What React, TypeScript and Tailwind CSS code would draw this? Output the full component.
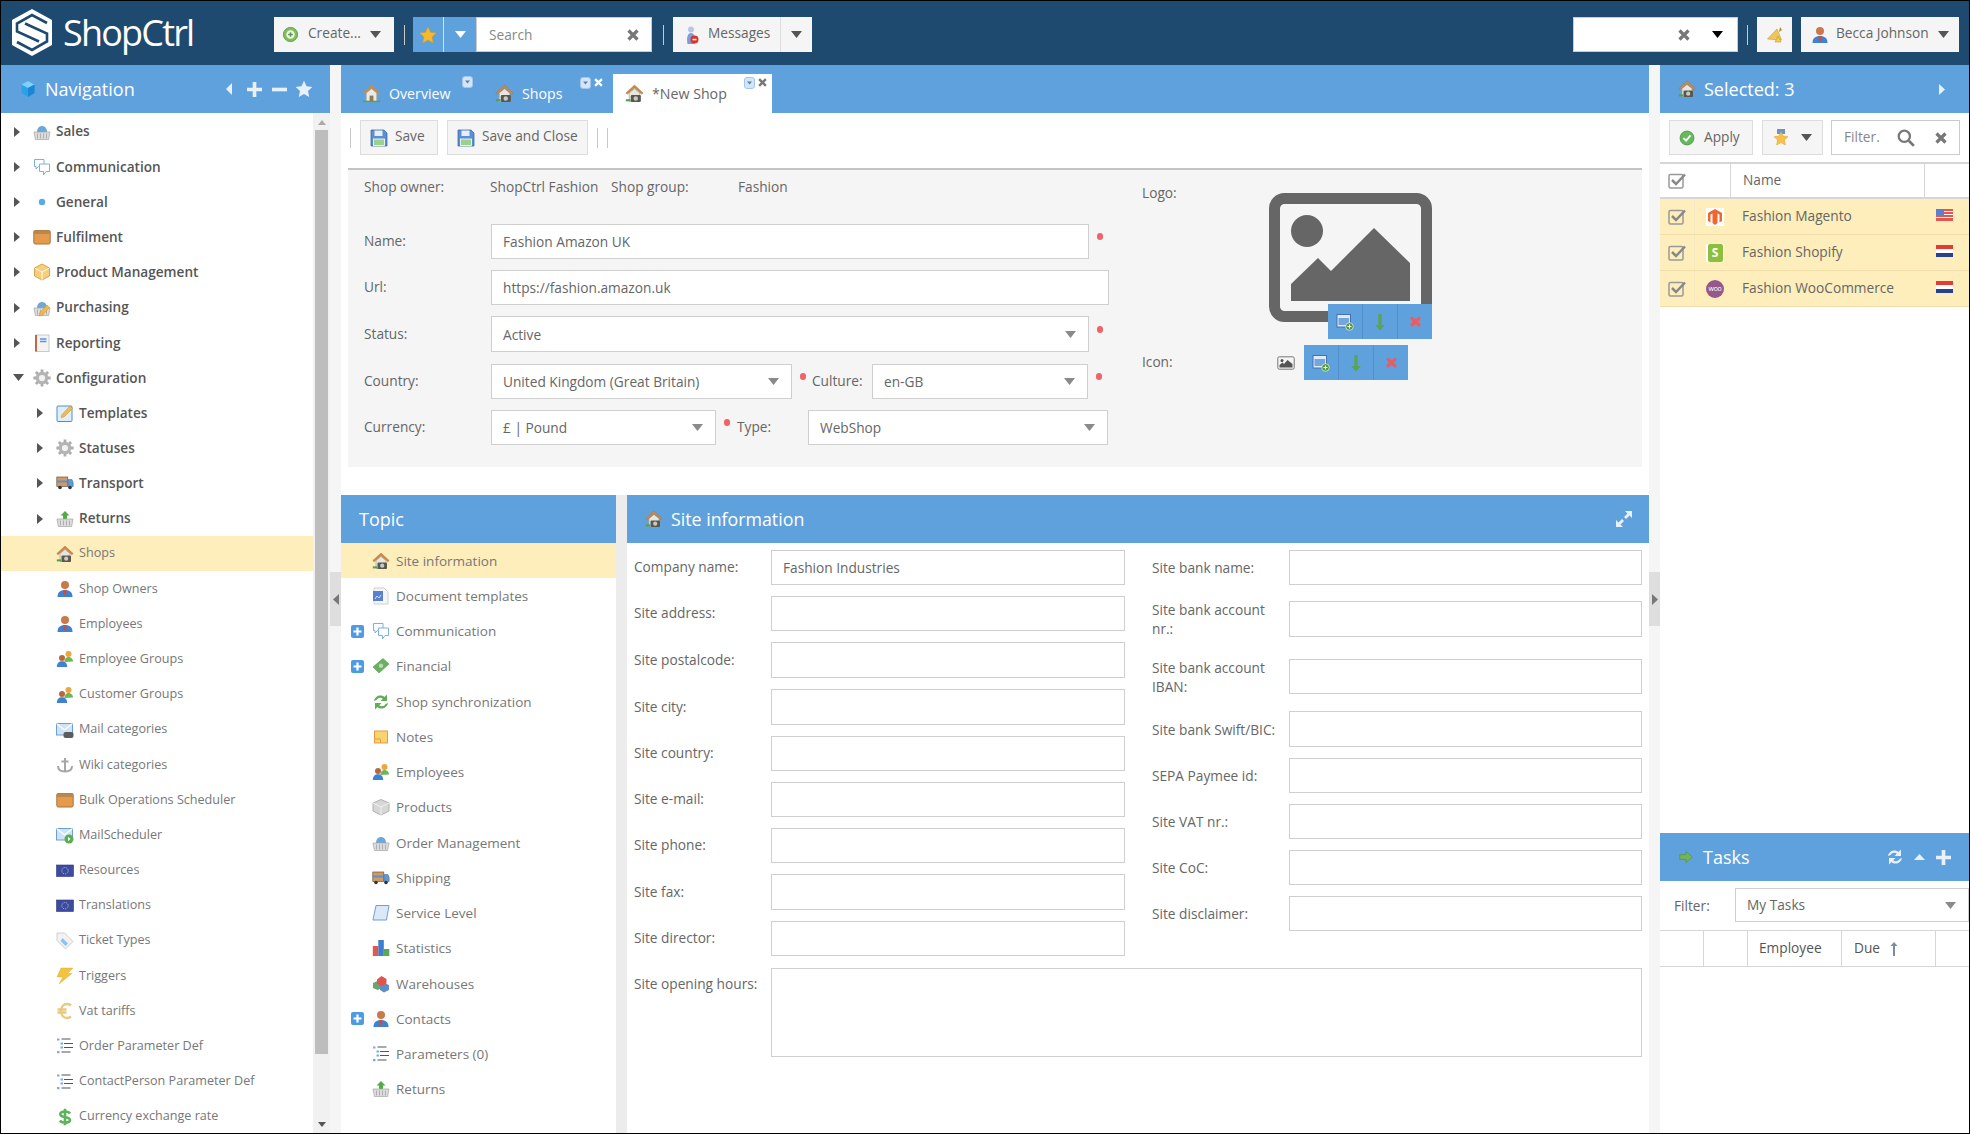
import React from 'react';

const shopGlyph = (
  <>
    <path d="M4 8.500 9 4.500l5 4V16.500H4Z" fill="#e9e6df" stroke="#a9a59c" strokeWidth=".7" />
    <path d="M.8 8.600 9 1l8.200 7.600-1.300 1.200L9 3.700 2.100 9.800Z" fill="#c98b4a" stroke="#a86f35" strokeWidth=".4" />
    <rect x="5.500" y="10.500" width="9.500" height="6.500" rx="1" fill="#58584f" />
    <circle cx="10.200" cy="13.700" r="2.100" fill="#c9c9c2" />
    <rect x=".8" y="14.400" width="4.400" height="2" fill="#4fa24a" />
  </>
);

const basketBase = (
  <>
    <path d="M1 9h16l-1.400 7.500H2.400Z" fill="#dcdcdc" stroke="#a5a5a5" strokeWidth=".7" />
    <path d="M4.500 10.500v5M7.500 10.500v5M10.500 10.500v5M13.500 10.500v5" stroke="#a5a5a5" strokeWidth=".8" />
  </>
);

const gearTeeth = 'M9 .4v3.500M9 14.100v3.500M.4 9h3.500M14.100 9h3.500M2.900 2.900l2.500 2.500M12.600 12.600l2.500 2.500M15.100 2.900l-2.500 2.500M5.400 12.600l-2.500 2.500';

const icons: Record<string, React.ReactNode> = {
  shop: shopGlyph,
  home: (
    <>
      <path d="M4 8.500 9 4.500l5 4V16.500H4Z" fill="#efeadf" stroke="#a9a59c" strokeWidth=".7" />
      <path d="M.8 8.600 9 1l8.200 7.600-1.300 1.200L9 3.700 2.100 9.800Z" fill="#c98b4a" />
      <rect x="7.200" y="11" width="3.600" height="5.500" fill="#8a7a5e" />
      <rect x=".8" y="15.800" width="16.400" height="1.400" fill="#5fa24d" />
    </>
  ),
  basket: (
    <>
      <path d="M4 9c0-4 2.500-6 5-6s5 2 5 6Z" fill="#6da9d8" />
      {basketBase}
    </>
  ),
  basketUp: (
    <>
      <path d="M9 1l4.500 4.500H11V9H7V5.500H4.500Z" fill="#55ab48" />
      {basketBase}
    </>
  ),
  basketPen: (
    <>
      <path d="M4 9c0-4 2.500-6 5-6s5 2 5 6Z" fill="#6da9d8" />
      {basketBase}
      <path d="M6 17l1-3.500 7-7.500 2.500 2.500-7 7.500Z" fill="#f0b949" stroke="#c98b2c" strokeWidth=".5" />
    </>
  ),
  chat: (
    <>
      <path d="M1.500 1.500h9.500v7H5.500L3 11V8.500H1.500Z" fill="#fff" stroke="#7eb0e0" />
      <path d="M6.500 6h10v7.500h-3.500L10.500 17v-3.500h-4Z" fill="#fff" stroke="#7eb0e0" />
    </>
  ),
  dot: <circle cx="9" cy="9" r="3.200" fill="#53aee8" />,
  crate: (
    <>
      <rect x=".8" y="2.500" width="16.400" height="13.500" rx="1.500" fill="#e69a4c" stroke="#a9743d" />
      <rect x=".8" y="2.500" width="16.400" height="3.500" fill="#b98850" />
    </>
  ),
  cube: (
    <>
      <path d="M9 1l7.500 4v8L9 17l-7.500-4V5Z" fill="#f6cf7d" stroke="#d9a24b" />
      <path d="M1.500 5 9 9l7.500-4M9 9v8" fill="none" stroke="#fff" strokeWidth=".9" />
    </>
  ),
  notebook: (
    <>
      <rect x="2.500" y="1" width="13.500" height="16.500" fill="#f3f3f3" stroke="#c9c9c9" />
      <rect x="2" y="1" width="2" height="16.500" fill="#c06a45" />
      <path d="M7 5h6.500M7 7.500h6.500" stroke="#5f92da" strokeWidth="1.500" />
    </>
  ),
  gear: (
    <>
      <path d={gearTeeth} stroke="#adadad" strokeWidth="2.800" />
      <circle cx="9" cy="9" r="4.700" fill="#f2f2f2" stroke="#b4b4b4" strokeWidth="3.200" />
    </>
  ),
  template: (
    <>
      <rect x="1" y="2" width="15" height="15.500" rx="1" fill="#dfeefc" stroke="#4d8ed0" />
      <path d="M5 13.500 6 10.500 14 2l2.500 2.500L8 13Z" fill="#f0bb52" stroke="#c58f2d" strokeWidth=".5" />
    </>
  ),
  truck: (
    <>
      <rect x=".8" y="3" width="11" height="9.500" fill="#d29a5e" stroke="#6c5a48" strokeWidth=".7" />
      <path d="M.8 6.500h11v2h-11Z" fill="#5f91c9" />
      <path d="M12 5.500h4l1.200 3v4H12Z" fill="#5d9ad8" stroke="#44648a" strokeWidth=".5" />
      <circle cx="4" cy="13.500" r="1.800" fill="#333" />
      <circle cx="14" cy="13.500" r="1.800" fill="#333" />
    </>
  ),
  person: (
    <>
      <circle cx="9" cy="5" r="4" fill="#c9794a" />
      <path d="M1.500 17c0-5 3-7 7.500-7s7.500 2 7.500 7Z" fill="#3f82d2" />
      <path d="M8 10h2l.5 4-1.500 1.500L7.500 14Z" fill="#d9483b" />
    </>
  ),
  people: (
    <>
      <circle cx="12.500" cy="4" r="3" fill="#eca63f" />
      <path d="M8.500 12c0-3.500 2-5 4-5s4.500 1.500 4.500 4.500Z" fill="#6cb65a" />
      <circle cx="6" cy="8" r="3" fill="#b9683c" />
      <path d="M.8 17c0-4 2.200-5.800 5.200-5.800s5.200 1.800 5.200 5.800Z" fill="#3f82d2" />
    </>
  ),
  mailLink: (
    <>
      <rect x=".5" y="2.500" width="16" height="11.500" fill="#cfe3f7" stroke="#6d9ed2" />
      <path d="M.5 2.500 8.500 9l8-6.500" fill="none" stroke="#fff" strokeWidth="1.200" />
      <rect x="7.500" y="11" width="10" height="6" rx="2" fill="#5c5c5c" />
    </>
  ),
  mailPlay: (
    <>
      <rect x=".5" y="2.500" width="16" height="11.500" fill="#cfe3f7" stroke="#6d9ed2" />
      <path d="M.5 2.500 8.500 9l8-6.500" fill="none" stroke="#fff" strokeWidth="1.200" />
      <circle cx="13" cy="13" r="4.500" fill="#5bad4e" />
      <path d="M12 10.800v4.400l2.500-2.200Z" fill="#fff" />
    </>
  ),
  anchor: (
    <path d="M9 2v13M5.500 5.500h7M2 10c0 4 3.500 5.500 7 5.500s7-1.500 7-5.500" fill="none" stroke="#a6a6a6" strokeWidth="2" />
  ),
  eu: (
    <>
      <rect x=".5" y="3" width="17" height="11.500" fill="#3d4b9e" stroke="#2e3a80" strokeWidth=".6" />
      <circle cx="9" cy="8.700" r="3.200" fill="none" stroke="#c6c9e8" strokeWidth=".9" strokeDasharray="1 1" />
    </>
  ),
  tag: (
    <>
      <path d="M1 1h7.500L17 9.500 9.500 17 1 8.500Z" fill="#f2f2f2" stroke="#cfcfcf" />
      <path d="M6.500 6 12 11.500 9.500 14 4.500 9Z" fill="#8cc3ee" />
    </>
  ),
  bolt: <path d="M5 1h12l-5.500 5.500H16L3 17l4-7H1Z" fill="#f1c33f" stroke="#dba72b" strokeWidth=".4" />,
  euro: (
    <path d="M15 3.500C13.800 2.500 12.500 2 11 2 7.500 2 5 5 5 9s2.500 7 6 7c1.500 0 2.800-.5 4-1.500M1.500 7.500h9M1.500 10.500h9" fill="none" stroke="#eac97e" strokeWidth="2.400" />
  ),
  list: (
    <>
      <path d="M5.500 2h9M8 6.500h9M8 10.500h9M5.500 15h9" stroke="#555" strokeWidth="1.200" />
      <path d="M1 1.500h2.500v2H1ZM4.500 5.500H7v2H4.500ZM4.500 9.500H7v2H4.500ZM1 14h2.500v2.200H1Z" fill="#7fa9e6" />
    </>
  ),
  dollar: (
    <path d="M14 5.500C13 4 11.200 3.500 9 3.500c-2.800 0-4.700 1-4.700 2.800C4.300 10.500 14 8 14 12c0 1.800-2 2.700-5 2.700-2.300 0-4-.7-5-2.200M9 .8v16.400" fill="none" stroke="#5cb35b" strokeWidth="2.600" />
  ),
  doc: (
    <>
      <path d="M2 1h10l4 4v12H2Z" fill="#f5f5f5" stroke="#cfcfcf" />
      <rect x="1" y="4" width="10" height="10" fill="#5a7fd0" />
      <path d="M3 12l2-3 2 2 2-3" stroke="#cfe0fb" fill="none" />
    </>
  ),
  money: (
    <>
      <path d="M1 10 11 1.500 17 7 7 16Z" fill="#69b060" stroke="#4b8e45" strokeWidth=".5" />
      <circle cx="9" cy="8.700" r="2.200" fill="#b4dcae" />
    </>
  ),
  sync: (
    <>
      <path d="M2 8c.6-3.500 3.500-5.500 6.500-5.500 1.700 0 3 .5 4 1.500L15 1.500V8H8.500l2.300-2.300c-.7-.7-1.500-1-2.500-1-1.800 0-3.200 1-3.800 2.300Z" fill="#5fae55" />
      <path d="M16 10c-.6 3.500-3.500 5.500-6.500 5.500-1.700 0-3-.5-4-1.500L3 16.500V10h6.500l-2.300 2.300c.7.7 1.500 1 2.500 1 1.800 0 3.200-1 3.800-2.300Z" fill="#5fae55" />
    </>
  ),
  note: (
    <>
      <rect x="2.500" y="3" width="13" height="12" fill="#fbd46e" stroke="#e59c43" />
      <path d="M2.500 11h6v4" fill="none" stroke="#e59c43" />
    </>
  ),
  lego: (
    <>
      <path d="M1 5 9 1.500 17 5v8l-8 4-8-4Z" fill="#d7d7d7" stroke="#b0b0b0" />
      <path d="M1 5l8 4 8-4M9 9v8" fill="none" stroke="#f1f1f1" />
    </>
  ),
  scroll: <path d="M4 1.500h13l-2.500 14.500H1Z" fill="#dbe8f7" stroke="#6e9fd4" />,
  chart: (
    <>
      <rect x=".8" y="7" width="5.500" height="10" fill="#e2574e" />
      <rect x="6.300" y="1" width="5.500" height="16" fill="#3e7dd0" />
      <rect x="11.800" y="10" width="5.500" height="7" fill="#58a957" />
    </>
  ),
  boxes: (
    <>
      <path d="M1 8l4.500-2L10 8v5l-4.500 2L1 13Z" fill="#69a66a" />
      <path d="M8 10l4-2 5 2v5l-5 2.500L8 15Z" fill="#5d8fc4" />
      <path d="M5 4.500 9.500 1l5 3v4.500l-5 3-4.500-3Z" fill="#e0544e" />
    </>
  ),
  floppy: (
    <>
      <path d="M1 1h13l3 3v13H1Z" fill="#5b8fd4" stroke="#31619f" strokeWidth=".7" />
      <rect x="4.500" y="1.500" width="8" height="5.500" fill="#e6eef8" />
      <rect x="3.500" y="10" width="11" height="6.500" fill="#9bd08e" stroke="#fff" strokeWidth=".8" />
    </>
  ),
  create: (
    <>
      <circle cx="9" cy="9" r="7.500" fill="#7fbf5c" stroke="#5d9a42" />
      <circle cx="9" cy="9" r="4.500" fill="#f2f2f2" />
      <path d="M9 6.500v5M6.500 9h5" stroke="#5d9a42" strokeWidth="1.600" />
    </>
  ),
  star: <path d="M9 .8l2.500 5.500 5.800.7-4.300 4 1.200 5.900L9 14l-5.200 2.900L5 11 .7 7l5.800-.7Z" fill="#f4b92f" stroke="#d69a1d" strokeWidth=".5" />,
  medal: (
    <>
      <path d="M5 0h8v5H5Z" fill="#6c93c8" />
      <path d="M9 2.500l2.100 4.600 4.900.6-3.600 3.300 1 5-4.400-2.500-4.400 2.500 1-5L2 7.700l4.900-.6Z" fill="#f7c04a" stroke="#dca12a" strokeWidth=".5" />
    </>
  ),
  messages: (
    <>
      <circle cx="8" cy="3.500" r="3" fill="#b9c6e6" />
      <path d="M4.500 18c-1-5-.5-11 3.500-11s4.500 6 3.500 11Z" fill="#7f9bd9" />
      <circle cx="11.500" cy="13.500" r="4" fill="#d7342b" />
      <rect x="9.500" y="12.800" width="4" height="1.500" fill="#fff" />
    </>
  ),
  bell: (
    <>
      <path d="M1.500 13 11 3l4.500 11Z" fill="#eec65c" stroke="#c69a32" strokeWidth=".6" />
      <path d="M14 1l2 3-3 2Z" fill="#b98a2d" />
      <path d="M9 16l3-6 3 6Z" fill="#f7d048" stroke="#b58a20" strokeWidth=".5" />
    </>
  ),
  apply: (
    <>
      <circle cx="9" cy="9" r="7.800" fill="#66b85d" stroke="#4d9a45" />
      <path d="M5 9.200 8 12l5-6" fill="none" stroke="#fff" strokeWidth="2" />
    </>
  ),
  addImage: (
    <>
      <rect x="1" y="1.500" width="13.500" height="12.500" fill="#dfe9f7" stroke="#4770b4" />
      <rect x="2.500" y="5" width="10.500" height="7" fill="#72a6dc" />
      <circle cx="13.500" cy="13.500" r="3.800" fill="#4d9c3f" stroke="#fff" strokeWidth=".6" />
      <path d="M13.500 11.500v4M11.500 13.500h4" stroke="#fff" />
    </>
  ),
  down: <path d="M7.300 1h3.400v11H14l-5 5.500L4 12h3.300Z" fill="#58a55a" />,
  remove: <path d="M4 2 9 6l5-4 2.500 2.500L12.500 9l4 5-2.500 2.500-5-4-5 4L1.500 14l4-5-4-4.500Z" fill="#ee5a5f" />,
  next: <path d="M1 6h8V2l8 7-8 7v-4H1Z" fill="#74b652" stroke="#4f8f3a" strokeWidth=".8" />,
  hex: (
    <>
      <path d="M9 1l6.500 3.500V13L9 17l-6.500-4V4.500Z" fill="#2ba2e8" />
      <path d="M2.500 4.500 9 8l6.500-3.500L9 1Z" fill="#7fd0f7" />
      <path d="M9 8v9l6.500-4V4.500Z" fill="#1b86d6" />
    </>
  ),
  imageSmall: (
    <>
      <rect x=".8" y="2.800" width="16.400" height="12.400" rx="1.500" fill="#f5f5f5" stroke="#777" />
      <circle cx="5" cy="6.500" r="1.500" fill="#555" />
      <path d="M2.500 13.500v-2.500L5.500 8.500 7 10l3.500-4L15.500 10v3.500Z" fill="#555" />
    </>
  ),
};

function Ic({ name, className = 'h-[18px] w-[18px]' }: { name: string; className?: string }) {
  return (
    <svg viewBox="0 0 18 18" className={`shrink-0 ${className}`}>
      {icons[name]}
    </svg>
  );
}

function Caret({ className = 'fill-[#8a8a8a]' }: { className?: string }) {
  return (
    <svg viewBox="0 0 11 7" className={`h-[7px] w-[11px] shrink-0 ${className}`}>
      <path d="M0 0h11L5.500 7Z" />
    </svg>
  );
}

function Cross({ className = 'h-3 w-3 stroke-[#777]' }: { className?: string }) {
  return (
    <svg viewBox="0 0 12 12" className={`shrink-0 ${className}`}>
      <path d="M1.500 1.500l9 9M10.500 1.500l-9 9" strokeWidth="3.200" />
    </svg>
  );
}

function Pin() {
  return (
    <svg viewBox="0 0 11 12" className="h-3 w-[11px]">
      <rect x=".5" y=".5" width="10" height="11" rx="2.500" fill="#d4e5f8" stroke="#a3c6ec" />
      <path d="M3 4.500h5L5.500 7.500Z" fill="#5f7fa3" />
    </svg>
  );
}

function Check() {
  return (
    <svg viewBox="0 0 19 16" className="h-4 w-[19px] shrink-0">
      <rect x="1" y="1.500" width="14" height="13.500" rx="1.500" fill="none" stroke="#999" strokeWidth="1.500" />
      <path d="M4 7l4 4 9-9.500" fill="none" stroke="#888" strokeWidth="2.500" />
    </svg>
  );
}

function Sep() {
  return <div className="h-5 w-px shrink-0 bg-[#c8c8c8]" />;
}

const navItems = [
  { label: 'Sales', icon: 'basket', level: 0, arrow: 'right' },
  { label: 'Communication', icon: 'chat', level: 0, arrow: 'right' },
  { label: 'General', icon: 'dot', level: 0, arrow: 'right' },
  { label: 'Fulfilment', icon: 'crate', level: 0, arrow: 'right' },
  { label: 'Product Management', icon: 'cube', level: 0, arrow: 'right' },
  { label: 'Purchasing', icon: 'basketPen', level: 0, arrow: 'right' },
  { label: 'Reporting', icon: 'notebook', level: 0, arrow: 'right' },
  { label: 'Configuration', icon: 'gear', level: 0, arrow: 'down' },
  { label: 'Templates', icon: 'template', level: 1, arrow: 'right' },
  { label: 'Statuses', icon: 'gear', level: 1, arrow: 'right' },
  { label: 'Transport', icon: 'truck', level: 1, arrow: 'right' },
  { label: 'Returns', icon: 'basketUp', level: 1, arrow: 'right' },
  { label: 'Shops', icon: 'shop', level: 1, active: true },
  { label: 'Shop Owners', icon: 'person', level: 1 },
  { label: 'Employees', icon: 'person', level: 1 },
  { label: 'Employee Groups', icon: 'people', level: 1 },
  { label: 'Customer Groups', icon: 'people', level: 1 },
  { label: 'Mail categories', icon: 'mailLink', level: 1 },
  { label: 'Wiki categories', icon: 'anchor', level: 1 },
  { label: 'Bulk Operations Scheduler', icon: 'crate', level: 1 },
  { label: 'MailScheduler', icon: 'mailPlay', level: 1 },
  { label: 'Resources', icon: 'eu', level: 1 },
  { label: 'Translations', icon: 'eu', level: 1 },
  { label: 'Ticket Types', icon: 'tag', level: 1 },
  { label: 'Triggers', icon: 'bolt', level: 1 },
  { label: 'Vat tariffs', icon: 'euro', level: 1 },
  { label: 'Order Parameter Def', icon: 'list', level: 1 },
  { label: 'ContactPerson Parameter Def', icon: 'list', level: 1 },
  { label: 'Currency exchange rate', icon: 'dollar', level: 1 },
];

const topics = [
  { label: 'Site information', icon: 'shop', active: true },
  { label: 'Document templates', icon: 'doc' },
  { label: 'Communication', icon: 'chat', plus: true },
  { label: 'Financial', icon: 'money', plus: true },
  { label: 'Shop synchronization', icon: 'sync' },
  { label: 'Notes', icon: 'note' },
  { label: 'Employees', icon: 'people' },
  { label: 'Products', icon: 'lego' },
  { label: 'Order Management', icon: 'basket' },
  { label: 'Shipping', icon: 'truck' },
  { label: 'Service Level', icon: 'scroll' },
  { label: 'Statistics', icon: 'chart' },
  { label: 'Warehouses', icon: 'boxes' },
  { label: 'Contacts', icon: 'person', plus: true },
  { label: 'Parameters (0)', icon: 'list' },
  { label: 'Returns', icon: 'basketUp' },
];

const siteLeft = [
  { label: 'Company name:', value: 'Fashion Industries', h: 'h-[35px]' },
  { label: 'Site address:', h: 'h-[35px]' },
  { label: 'Site postalcode:', h: 'h-[36px]' },
  { label: 'Site city:', h: 'h-[36px]' },
  { label: 'Site country:', h: 'h-[35px]' },
  { label: 'Site e-mail:', h: 'h-[35px]' },
  { label: 'Site phone:', h: 'h-[35px]' },
  { label: 'Site fax:', h: 'h-[36px]' },
  { label: 'Site director:', h: 'h-[35px]' },
];

const siteRight = [
  { label: 'Site bank name:', cls: 'h-[35px] mb-[16px]' },
  { label: 'Site bank account nr.:', cls: 'h-[36px] mb-[22px]' },
  { label: 'Site bank account IBAN:', cls: 'h-[35px] mb-[17px]' },
  { label: 'Site bank Swift/BIC:', cls: 'h-[36px] mb-[11px]' },
  { label: 'SEPA Paymee id:', cls: 'h-[35px] mb-[11px]' },
  { label: 'Site VAT nr.:', cls: 'h-[35px] mb-[11px]' },
  { label: 'Site CoC:', cls: 'h-[35px] mb-[11px]' },
  { label: 'Site disclaimer:', cls: 'h-[35px]' },
];

function Field({ className, value, select }: { className: string; value?: string; select?: boolean }) {
  return (
    <div className={`flex shrink-0 items-center justify-between border border-[#cfcfcf] bg-white pl-[11px] pr-[12px] text-[13.7px] text-[#666] ${className}`}>
      <span className="mt-[2px]">{value}</span>
      {select && <Caret />}
    </div>
  );
}

function Required() {
  return <div className="mb-[10px] ml-[8px] mr-[2px] h-[7px] w-[6px] shrink-0 rounded-full bg-[#f0636b]" />;
}

function ImageButtons() {
  return (
    <div className="flex h-[35px] w-[104px] bg-[#5fa1dd]">
      <div className="flex flex-1 items-center justify-center border-r border-[#5390c9]"><Ic name="addImage" /></div>
      <div className="flex flex-1 items-center justify-center border-r border-[#5390c9]"><Ic name="down" /></div>
      <div className="flex flex-1 items-center justify-center"><Ic name="remove" className="h-[13px] w-[13px]" /></div>
    </div>
  );
}

function Tab({ label, icon, className, children }: { label: string; icon: string; className: string; children?: React.ReactNode }) {
  return (
    <div className={`relative flex h-[39px] items-center gap-2 pl-3 text-[14.2px] ${className}`}>
      <Ic name={icon} className="h-[19px] w-[19px]" />
      <span>{label}</span>
      {children}
    </div>
  );
}

function TopBar() {
  return (
    <div className="flex h-16 shrink-0 items-start bg-[#1f4a70] pt-4">
      <div className="-mt-[8px] flex w-[273px] items-center pl-[10px]">
        <svg viewBox="0 0 42 47" className="h-[47px] w-[42px]">
          <path d="M21 0 41 11v25L21 47 1 36V11Z" fill="#fff" />
          <path d="M36 14 21 6 6 14.500v8l22 10M6 33l15 8 15-8.500v-8L14 14.500" fill="none" stroke="#1f4a70" strokeWidth="2.600" />
        </svg>
        <span className="ml-[10px] text-[36px] font-medium leading-none tracking-[-1.800px] text-white">ShopCtrl</span>
      </div>
      <div className="flex h-[35px] w-[120px] items-center bg-[#f5f5f5] pl-2 text-[13.7px] text-[#666]">
        <Ic name="create" className="h-[17px] w-[17px]" />
        <span className="-mt-[2px] ml-[9px]">Create...</span>
        <Caret className="ml-[9px] fill-[#555]" />
      </div>
      <div className="ml-[10px] mr-[8px] mt-[8px]"><Sep /></div>
      <div className="flex h-[35px] w-[63px] bg-[#5fa1dd]">
        <div className="flex w-[31px] items-center justify-center border-r border-white/70"><Ic name="star" /></div>
        <div className="flex flex-1 items-center justify-center"><Caret className="fill-white" /></div>
      </div>
      <div className="flex h-[35px] w-[176px] items-center justify-between border border-[#ccc] bg-white pl-[12px] pr-[12px] text-[13.7px] text-[#888]">
        <span className="mt-[1px]">Search</span>
        <Cross />
      </div>
      <div className="ml-[11px] mr-[9px] mt-[8px]"><Sep /></div>
      <div className="flex h-[35px] w-[139px] items-center bg-[#f5f5f5] text-[13.7px] text-[#666]">
        <div className="flex h-full w-[108px] items-center gap-[7px] border-r border-[#ddd] pl-[10px]">
          <Ic name="messages" />
          <span className="-mt-[2px]">Messages</span>
        </div>
        <div className="flex flex-1 items-center justify-center"><Caret className="fill-[#555]" /></div>
      </div>
      <div className="ml-auto flex h-[35px] w-[165px] items-center border border-[#ccc] bg-white pl-[104px]">
        <Cross />
        <Caret className="ml-[22px]" />
      </div>
      <div className="ml-[9px] mr-[9px] mt-[8px]"><Sep /></div>
      <div className="flex h-[35px] w-[35px] items-center justify-center bg-[#f5f5f5]"><Ic name="bell" /></div>
      <div className="ml-[9px] mr-[10px] flex h-[35px] w-[158px] items-center bg-[#f5f5f5] pl-[10px] text-[13.7px] text-[#666]">
        <Ic name="person" />
        <span className="-mt-[2px] ml-[7px]">Becca Johnson</span>
        <Caret className="ml-[9px] fill-[#555]" />
      </div>
    </div>
  );
}

function Navigation() {
  return (
    <div className="flex w-[329px] shrink-0 flex-col bg-white">
      <div className="flex h-12 shrink-0 items-center bg-[#5fa1dd] pl-[18px] text-[18px] text-white">
        <Ic name="hex" />
        <span className="ml-[8px]">Navigation</span>
        <div className="ml-auto flex items-center pr-[17px] text-white">
          <svg viewBox="0 0 6 12" className="h-3 w-[6px] fill-[#e8f1fa]"><path d="M6 0v12L0 6Z" /></svg>
          <svg viewBox="0 0 14 14" className="ml-[15px] h-[15px] w-[15px] stroke-[#e8f1fa]"><path d="M7 0v14M0 7h14" strokeWidth="3.400" /></svg>
          <svg viewBox="0 0 14 14" className="ml-[10px] h-[15px] w-[15px] stroke-[#e8f1fa]"><path d="M0 7h14" strokeWidth="3.400" /></svg>
          <svg viewBox="0 0 18 18" className="ml-[8px] h-[18px] w-[18px] fill-[#e8f1fa]"><path d="M9 .8l2.500 5.500 5.800.7-4.300 4 1.200 5.900L9 14l-5.200 2.900L5 11 .7 7l5.800-.7Z" /></svg>
        </div>
      </div>
      <div className="flex flex-1 overflow-hidden">
        <div className="w-[312px] shrink-0 pt-[1px]">
          {navItems.map((item) => (
            <div
              key={item.label}
              className={`flex h-[35.2px] items-center ${item.level === 1 ? 'pl-[36px]' : 'pl-[13px]'} ${item.active ? 'bg-[#fdeebc]' : ''}`}
            >
              <div className="flex w-[19px] shrink-0 items-center">
                {item.arrow === 'right' && (
                  <svg viewBox="0 0 6 10" className="h-[10px] w-[6px] fill-[#555]"><path d="M0 0l6 5-6 5Z" /></svg>
                )}
                {item.arrow === 'down' && <Caret className="-ml-[1px] fill-[#555]" />}
              </div>
              <Ic name={item.icon} />
              <span className={`ml-[5px] whitespace-nowrap ${item.level === 0 || item.arrow ? 'text-[13.6px] font-semibold text-[#555]' : 'text-[12.6px] text-[#777]'}`}>
                {item.label}
              </span>
            </div>
          ))}
        </div>
        <div className="flex w-[17px] flex-col items-center bg-[#f1f1f1]">
          <svg viewBox="0 0 8 5" className="mt-[7px] h-[5px] w-2 fill-[#aaa]"><path d="M4 0l4 5H0Z" /></svg>
          <div className="mt-[5px] h-[924px] w-[13px] bg-[#bdbdbd]" />
          <svg viewBox="0 0 8 5" className="mb-[6px] mt-auto h-[5px] w-2 fill-[#555]"><path d="M0 0h8L4 5Z" /></svg>
        </div>
      </div>
    </div>
  );
}

function Gutter({ dir }: { dir: 'left' | 'right' }) {
  return (
    <div className="flex w-[11px] shrink-0 items-center">
      <div className="flex h-[54px] w-[11px] items-center justify-center bg-[#dedede]">
        <svg viewBox="0 0 6 11" className="h-[11px] w-[6px] fill-[#777]">
          <path d={dir === 'left' ? 'M6 0v11L0 5.500Z' : 'M0 0v11l6-5.500Z'} />
        </svg>
      </div>
    </div>
  );
}

function ShopForm() {
  return (
    <div className="mx-[7px] flex h-[299px] w-[1294px] border-t-2 border-[#c4c4c4] bg-[#f5f5f5] text-[13.7px] text-[#666]">
      <div className="w-[782px] shrink-0 pl-[16px] pt-[8px]">
        <div className="flex h-[18px] items-center">
          <span className="w-[126px]">Shop owner:</span>
          <span className="w-[121px]">ShopCtrl Fashion</span>
          <span className="w-[127px]">Shop group:</span>
          <span>Fashion</span>
        </div>
        <div className="mt-[28px] flex h-[35px] items-center">
          <span className="w-[127px]">Name:</span>
          <Field className="h-[35px] w-[598px]" value="Fashion Amazon UK" />
          <Required />
        </div>
        <div className="mt-[11px] flex h-[35px] items-center">
          <span className="w-[127px]">Url:</span>
          <Field className="h-[35px] w-[618px]" value="https://fashion.amazon.uk" />
        </div>
        <div className="mt-[11px] flex h-[36px] items-center">
          <span className="w-[127px]">Status:</span>
          <Field className="h-[36px] w-[598px]" value="Active" select />
          <Required />
        </div>
        <div className="mt-[12px] flex h-[35px] items-center">
          <span className="w-[127px]">Country:</span>
          <Field className="h-[35px] w-[301px]" value="United Kingdom (Great Britain)" select />
          <Required />
          <span className="ml-[4px] w-[60px]">Culture:</span>
          <Field className="h-[35px] w-[216px]" value="en-GB" select />
          <Required />
        </div>
        <div className="mt-[11px] flex h-[35px] items-center">
          <span className="w-[127px]">Currency:</span>
          <Field className="h-[35px] w-[225px]" value="£ | Pound" select />
          <Required />
          <span className="ml-[5px] w-[71px]">Type:</span>
          <Field className="h-[35px] w-[300px]" value="WebShop" select />
        </div>
      </div>
      <div className="flex-1 pl-[12px] pt-[23px]">
        <div className="flex items-start">
          <span className="-mt-[10px] w-[127px]">Logo:</span>
          <div className="relative h-[129px] w-[163px]">
            <svg viewBox="0 0 163 129" className="h-[129px] w-[163px]">
              <rect x="5.500" y="5.500" width="152" height="118" rx="10" fill="none" stroke="#666" strokeWidth="11" />
              <circle cx="38" cy="38" r="16" fill="#666" />
              <path d="M22 108V91l27-26 13 13 43-43 36 35v38Z" fill="#666" />
            </svg>
            <div className="absolute left-[59px] top-[111px]"><ImageButtons /></div>
          </div>
        </div>
        <div className="mt-[23px] flex h-[35px] items-center">
          <span className="w-[135px]">Icon:</span>
          <Ic name="imageSmall" />
          <div className="ml-[9px]"><ImageButtons /></div>
        </div>
      </div>
    </div>
  );
}

function TopicPanel() {
  return (
    <div className="w-[275px] shrink-0 bg-white">
      <div className="flex h-12 items-center bg-[#5fa1dd] pl-[18px] text-[18px] text-white">Topic</div>
      {topics.map((t) => (
        <div key={t.label} className={`flex h-[35.25px] items-center pl-[10px] text-[13.5px] text-[#777] ${t.active ? 'bg-[#fdeebc]' : ''}`}>
          <div className="w-[21px] shrink-0">
            {t.plus && (
              <svg viewBox="0 0 13 13" className="h-[13px] w-[13px]">
                <rect width="13" height="13" rx="2" fill="#4f9be3" />
                <path d="M6.500 2.500v8M2.500 6.500h8" stroke="#fff" strokeWidth="2.200" />
              </svg>
            )}
          </div>
          <Ic name={t.icon} />
          <span className="ml-[6px]">{t.label}</span>
        </div>
      ))}
    </div>
  );
}

function SitePanel() {
  return (
    <div className="flex-1 bg-white text-[13.7px] text-[#666]">
      <div className="flex h-12 items-center bg-[#5fa1dd] pl-[18px] pr-[17px] text-[17.8px] text-white">
        <Ic name="shop" />
        <span className="ml-[8px]">Site information</span>
        <svg viewBox="0 0 16 16" className="ml-auto h-4 w-4 fill-[#e8f1fa]">
          <path d="M9 0h7v7l-2.500-2.500L10 8 8 6l3.500-3.500ZM7 16H0V9l2.500 2.500L6 8l2 2-3.500 3.500Z" />
        </svg>
      </div>
      <div className="flex pl-[7px] pt-[7px]">
        <div className="flex w-[491px] shrink-0 flex-col gap-[11px]">
          {siteLeft.map((r) => (
            <div key={r.label} className={`flex items-center ${r.h}`}>
              <span className="w-[137px] shrink-0">{r.label}</span>
              <Field className={`w-[354px] ${r.h}`} value={r.value} />
            </div>
          ))}
        </div>
        <div className="ml-[27px] flex w-[490px] shrink-0 flex-col">
          {siteRight.map((r) => (
            <div key={r.label} className={`flex items-center ${r.cls}`}>
              <span className="w-[137px] shrink-0 pr-[4px] leading-[19px]">{r.label}</span>
              <div className="h-full w-[353px] border border-[#cfcfcf] bg-white" />
            </div>
          ))}
        </div>
      </div>
      <div className="mt-[12px] flex pl-[7px]">
        <span className="w-[137px] shrink-0 pt-[6px]">Site opening hours:</span>
        <div className="h-[89px] w-[871px] border border-[#cfcfcf] bg-white" />
      </div>
    </div>
  );
}

function MainArea() {
  return (
    <div className="flex w-[1308px] shrink-0 flex-col bg-white">
      <div className="flex h-12 shrink-0 items-end bg-[#5fa1dd] pl-[9px] text-white">
        <Tab label="Overview" icon="home" className="w-[133px]">
          <div className="absolute left-[112px] top-[2px]"><Pin /></div>
        </Tab>
        <Tab label="Shops" icon="shop" className="w-[130px]">
          <div className="absolute left-[97px] top-[3px]"><Pin /></div>
          <div className="absolute left-[111px] top-[4px]"><Cross className="h-[9px] w-[9px] stroke-white" /></div>
        </Tab>
        <Tab label="*New Shop" icon="shop" className="w-[159px] bg-white text-[#666]">
          <div className="absolute left-[131px] top-[3px]"><Pin /></div>
          <div className="absolute left-[145px] top-[4px]"><Cross className="h-[9px] w-[9px] stroke-[#777]" /></div>
        </Tab>
      </div>
      <div className="flex h-[55px] shrink-0 items-start pl-[9px] pt-[7px] text-[13.7px] text-[#666]">
        <div className="mt-[8px]"><Sep /></div>
        <div className="ml-[9px] flex h-[35px] w-[78px] items-center gap-[7px] border border-[#ddd] bg-[#f5f5f5] pl-[9px]">
          <Ic name="floppy" />
          <span className="-mt-[2px]">Save</span>
        </div>
        <div className="ml-[9px] flex h-[35px] w-[141px] items-center gap-[7px] border border-[#ddd] bg-[#f5f5f5] pl-[9px]">
          <Ic name="floppy" />
          <span className="-mt-[2px]">Save and Close</span>
        </div>
        <div className="ml-[9px] mr-[9px] mt-[8px]"><Sep /></div>
        <div className="mt-[8px]"><Sep /></div>
      </div>
      <ShopForm />
      <div className="mt-[28px] flex flex-1 overflow-hidden">
        <TopicPanel />
        <div className="w-[11px] shrink-0 bg-[#ececec]" />
        <SitePanel />
      </div>
    </div>
  );
}

function Flag({ us }: { us?: boolean }) {
  if (us) {
    return (
      <svg viewBox="0 0 17 12" className="mb-[3px] ml-auto mr-[16px] h-3 w-[17px]">
        <rect width="17" height="12" fill="#e4564e" />
        <path d="M0 2.500h17M0 5.500h17M0 8.500h17" stroke="#fff" strokeWidth="1.200" />
        <rect width="8" height="6" fill="#5d7fd1" />
      </svg>
    );
  }
  return (
    <svg viewBox="0 0 17 12" className="mb-[3px] ml-auto mr-[16px] h-3 w-[17px]">
      <rect width="17" height="4" fill="#e23c34" />
      <rect y="4" width="17" height="4" fill="#fff" />
      <rect y="8" width="17" height="4" fill="#27408f" />
    </svg>
  );
}

function RightPanel() {
  const rows = [
    {
      name: 'Fashion Magento',
      us: true,
      logo: (
        <svg viewBox="0 0 18 18" className="h-[18px] w-[18px]">
          <rect width="18" height="18" fill="#fff" />
          <path d="M9 1l7 4v8l-2.500 1.500V6.500L11.500 5.500V15L9 17l-2.500-2V5.500L4.500 6.500v8L2 13V5Z" fill="#ee672f" />
        </svg>
      ),
    },
    {
      name: 'Fashion Shopify',
      logo: (
        <div className="flex h-[18px] w-[18px] items-center justify-center bg-white">
          <div className="flex h-[18px] w-[15px] items-center justify-center rounded-[2px] bg-[#8dbf3f] text-[12px] font-bold leading-none text-white">S</div>
        </div>
      ),
    },
    {
      name: 'Fashion WooCommerce',
      logo: (
        <div className="flex h-[18px] w-[18px] items-center justify-center rounded-full bg-[#96588a] text-[7px] leading-none tracking-[-0.3px] text-white">woo</div>
      ),
    },
  ];

  return (
    <div className="flex w-[309px] shrink-0 flex-col bg-white text-[13.7px] text-[#666]">
      <div className="flex h-12 shrink-0 items-center bg-[#5fa1dd] pl-[18px] pr-[24px] text-[18px] text-white">
        <Ic name="shop" />
        <span className="ml-[8px]">Selected: 3</span>
        <svg viewBox="0 0 6 11" className="ml-auto h-[11px] w-[6px] fill-[#e8f1fa]"><path d="M0 0v11l6-5.500Z" /></svg>
      </div>
      <div className="flex h-[49px] shrink-0 items-start pl-[9px] pt-[7px]">
        <div className="flex h-[35px] w-[84px] items-center border border-[#ddd] bg-[#f5f5f5] pl-[9px]">
          <Ic name="apply" className="h-4 w-4" />
          <span className="ml-[9px]">Apply</span>
        </div>
        <div className="ml-[9px] flex h-[35px] w-[61px] items-center border border-[#ddd] bg-[#f5f5f5] pl-[9px]">
          <Ic name="medal" />
          <Caret className="ml-[11px] fill-[#555]" />
        </div>
        <div className="ml-[8px] flex h-[35px] w-[129px] items-center border border-[#ccc] bg-white pl-[12px] text-[#888]">
          <span>Filter.</span>
          <svg viewBox="0 0 16 16" className="ml-[17px] h-[18px] w-[18px] fill-none stroke-[#777]">
            <circle cx="6.500" cy="6.500" r="5" strokeWidth="2" />
            <path d="M10.500 10.500 15 15" strokeWidth="2.400" />
          </svg>
          <div className="ml-[20px]"><Cross /></div>
        </div>
      </div>
      <div className="flex h-[37px] shrink-0 items-center border-y-2 border-[#d6d6d6] pl-[8px]">
        <Check />
        <div className="ml-[43px] flex h-full w-[195px] items-center border-x border-[#d6d6d6] pl-[12px]">Name</div>
      </div>
      {rows.map((r) => (
        <div key={r.name} className="flex h-[36px] shrink-0 items-center border-b border-[#f1deab] bg-[#fdeebc] pl-[8px]">
          <Check />
          <div className="ml-[7px] flex h-full items-center border-l border-[#f5e7c0] pl-[11px]">{r.logo}</div>
          <span className="ml-[18px]">{r.name}</span>
          <Flag us={r.us} />
        </div>
      ))}
      <div className="mt-auto h-[300px] shrink-0">
        <div className="flex h-12 items-center bg-[#5fa1dd] pl-[19px] pr-[18px] text-[18px] text-white">
          <Ic name="next" className="h-[14px] w-[14px]" />
          <span className="ml-[10px]">Tasks</span>
          <svg viewBox="0 0 18 18" className="ml-auto h-[18px] w-[18px] fill-[#e8f1fa]">
            <path d="M2 8c.6-3.500 3.500-5.500 6.500-5.500 1.700 0 3 .5 4 1.500L15 1.500V8H8.500l2.300-2.300c-.7-.7-1.500-1-2.500-1-1.800 0-3.200 1-3.800 2.300Z" />
            <path d="M16 10c-.6 3.500-3.500 5.500-6.500 5.500-1.700 0-3-.5-4-1.500L3 16.500V10h6.500l-2.300 2.300c.7.7 1.500 1 2.500 1 1.800 0 3.200-1 3.800-2.300Z" />
          </svg>
          <svg viewBox="0 0 11 6" className="ml-[10px] h-[6px] w-[11px] fill-[#e8f1fa]"><path d="M5.500 0l5.500 6H0Z" /></svg>
          <svg viewBox="0 0 14 14" className="ml-[11px] h-[15px] w-[15px] stroke-[#e8f1fa]"><path d="M7 0v14M0 7h14" strokeWidth="3.400" /></svg>
        </div>
        <div className="flex h-[49px] items-start pl-[14px] pt-[7px]">
          <span className="w-[61px] pt-[8px]">Filter:</span>
          <div className="flex h-[34px] w-[234px] items-center justify-between border border-[#cfcfcf] pl-[11px] pr-[12px]">
            <span className="mt-[1px]">My Tasks</span>
            <Caret />
          </div>
        </div>
        <div className="flex h-[37px] border-y border-[#d6d6d6] text-[#555]">
          <div className="w-[44px] border-r border-[#d6d6d6]" />
          <div className="w-[44px] border-r border-[#d6d6d6]" />
          <div className="flex w-[94px] items-center border-r border-[#d6d6d6] pl-[11px]">Employee</div>
          <div className="flex w-[94px] items-center border-r border-[#d6d6d6] pl-[12px]">
            Due
            <svg viewBox="0 0 8 14" className="ml-[10px] h-[14px] w-2 fill-[#7d8c9b]"><path d="M4 0l3.500 4H5v10H3V4H.5Z" /></svg>
          </div>
        </div>
      </div>
    </div>
  );
}

export default function App() {
  return (
    <div className="flex h-[1134px] w-[1970px] flex-col overflow-hidden border border-black bg-[#f5f5f5] font-['Open_Sans',sans-serif]">
      <TopBar />
      <div className="flex min-h-0 flex-1">
        <Navigation />
        <Gutter dir="left" />
        <MainArea />
        <Gutter dir="right" />
        <RightPanel />
      </div>
    </div>
  );
}
